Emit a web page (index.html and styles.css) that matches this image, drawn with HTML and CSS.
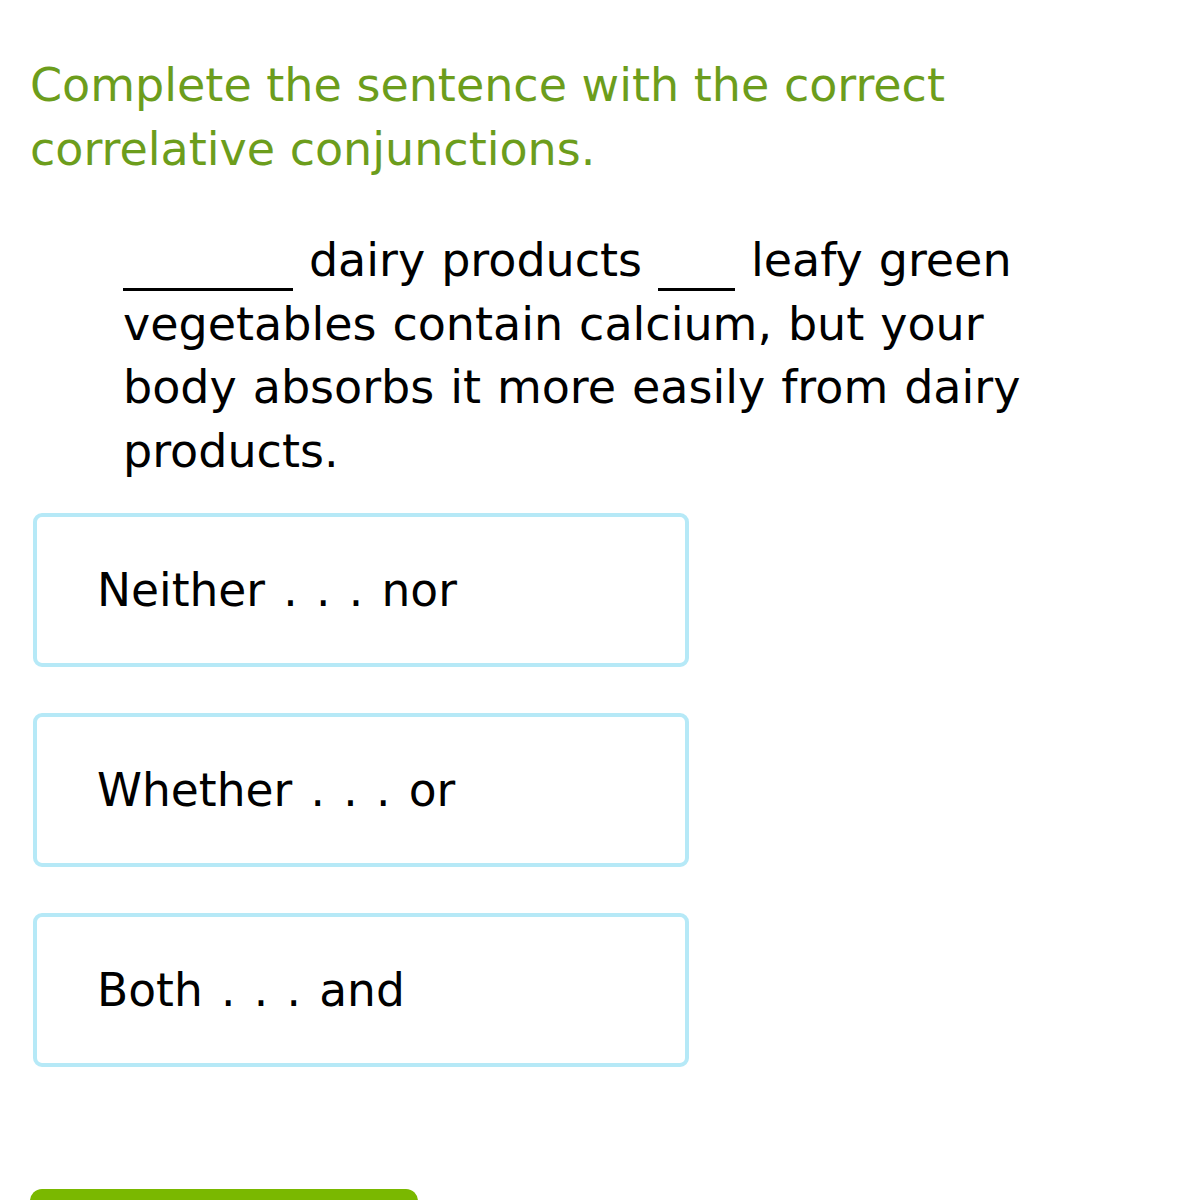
FILE: index.html
```html
<!DOCTYPE html>
<html>
<head>
<meta charset="utf-8">
<link rel="stylesheet" href="styles.css">
</head>
<body>
<div class="page">
  <h1 class="prompt">Complete the sentence with the correct correlative conjunctions.</h1>
  <p class="sentence"><span class="blank blank-long"></span> dairy products <span class="blank blank-short"></span> leafy green vegetables contain calcium, but your body absorbs it more easily from dairy products.</p>
  <div class="choices">
    <div class="choice">Neither . . . nor</div>
    <div class="choice">Whether . . . or</div>
    <div class="choice">Both . . . and</div>
  </div>
  <div class="submit"></div>
</div>
</body>
</html>
```
FILE: styles.css
```css
html, body {
  margin: 0;
  padding: 0;
  background: #fff;
  overflow: hidden;
  height: 1200px;
}
.page {
  padding: 53px 0 0 30px;
  font-family: "DejaVu Sans", Verdana, sans-serif;
}
.prompt {
  margin: 0;
  font-weight: normal;
  font-size: 46px;
  line-height: 64px;
  color: #6c9d1c;
  width: 1000px;
}
.sentence {
  margin: 48px 0 0 93px;
  width: 920px;
  font-size: 46px;
  line-height: 63.5px;
  color: #000;
  word-spacing: 1.3px;
}
.blank {
  display: inline-block;
  border-bottom: 3px solid #000;
  vertical-align: -15px;
}
.blank-long { width: 170px; }
.blank-short { width: 77px; }
.choices {
  margin-top: 30px;
  display: flex;
  flex-direction: column;
  gap: 46px;
  margin-left: 3px;
}
.choice {
  border: 4px solid #b6e9f7;
  border-radius: 9px;
  display: flex;
  align-items: center;
  padding-left: 60px;
  box-sizing: border-box;
  height: 154px;
  width: 656px;
  font-size: 45.5px;
  word-spacing: 3.8px;
  color: #000;
}
.submit {
  margin-top: 122px;
  width: 388px;
  height: 60px;
  border-radius: 12px;
  background: #7ab800;
}
```
